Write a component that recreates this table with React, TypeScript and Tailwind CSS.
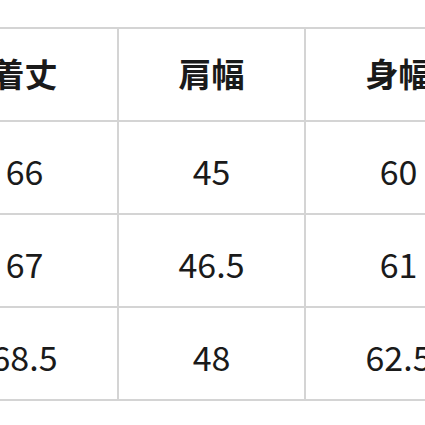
import React from "react";

const rows: string[][] = [
  ["66", "45", "60"],
  ["67", "46.5", "61"],
  ["68.5", "48", "62.5"],
];

const headers = ["着丈", "肩幅", "身幅"];

export default function App() {
  return (
    <div
      className="w-[425px] h-[425px] overflow-hidden bg-white text-[#1a1a1a]"
      style={{ fontFamily: '"Noto Sans CJK JP", "Noto Sans", sans-serif' }}
    >
      <div className="mt-[27px] ml-[-68px] w-[561px] border-t-2 border-[#d4d4d4]">
        <div className="flex">
          {headers.map((h) => (
            <div
              key={h}
              className="w-[187px] h-[93px] shrink-0 border-r-2 border-b-2 border-[#d4d4d4] flex items-center justify-center text-[33px] font-bold pb-[2px]"
            >
              {h}
            </div>
          ))}
        </div>
        {rows.map((r, i) => (
          <div key={i} className="flex">
            {r.map((v, j) => (
              <div
                key={j}
                className="w-[187px] h-[93px] shrink-0 border-r-2 border-b-2 border-[#d4d4d4] flex items-center justify-center text-[34px] pt-[6px]"
              >
                {v}
              </div>
            ))}
          </div>
        ))}
      </div>
    </div>
  );
}
